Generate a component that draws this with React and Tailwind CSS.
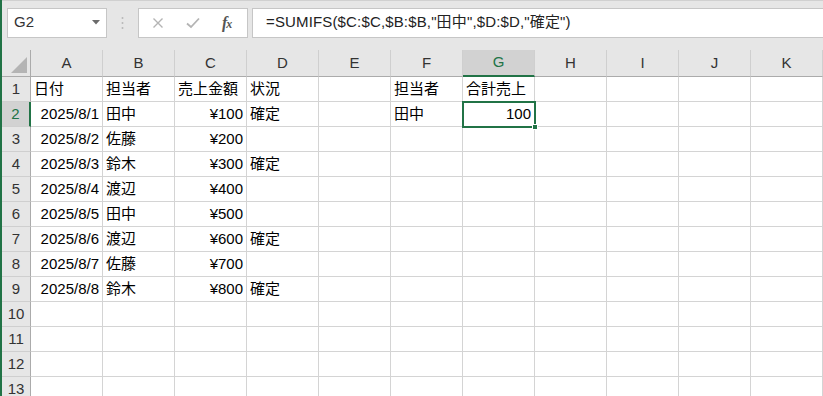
import React from 'react';

const cols = ['A', 'B', 'C', 'D', 'E', 'F', 'G', 'H', 'I', 'J', 'K'];

// each row: [A, B, C, D, E, F, G]
const rows = [
  ['日付', '担当者', '売上金額', '状況', '', '担当者', '合計売上'],
  ['2025/8/1', '田中', '¥100', '確定', '', '田中', '100'],
  ['2025/8/2', '佐藤', '¥200', '', '', '', ''],
  ['2025/8/3', '鈴木', '¥300', '確定', '', '', ''],
  ['2025/8/4', '渡辺', '¥400', '', '', '', ''],
  ['2025/8/5', '田中', '¥500', '', '', '', ''],
  ['2025/8/6', '渡辺', '¥600', '確定', '', '', ''],
  ['2025/8/7', '佐藤', '¥700', '', '', '', ''],
  ['2025/8/8', '鈴木', '¥800', '確定', '', '', ''],
  [], [], [], []
];

const rightAligned = (v) => /^[¥\d]/.test(v);

const FormulaBar = () => (
  <div className="flex items-center h-[50px] bg-[#e6e6e6] border-t border-[#d0d0d0] pb-[6px]">
    {/* name box */}
    <div className="ml-[5px] w-[100px] h-[30px] bg-white border border-[#c6c6c6] flex items-center justify-between pl-[6px] pr-[6px]">
      <span className="text-[15px] text-[#333]">G2</span>
      <svg width="8" height="5" viewBox="0 0 8 5">
        <path d="M0 0 L8 0 L4 4.5 Z" fill="#6b6b6b" />
      </svg>
    </div>
    <div className="w-[31px] flex justify-center">
      <svg width="3" height="14" viewBox="0 0 3 14">
        <circle cx="1.5" cy="2" r="1" fill="#b8b8b8" />
        <circle cx="1.5" cy="7" r="1" fill="#b8b8b8" />
        <circle cx="1.5" cy="12" r="1" fill="#b8b8b8" />
      </svg>
    </div>
    {/* cancel / enter / fx */}
    <div className="w-[110px] h-[30px] bg-white border border-[#c6c6c6] flex items-center">
      <svg className="ml-[13px]" width="12" height="12" viewBox="0 0 12 12">
        <path d="M1.5 1.5 L10.5 10.5 M10.5 1.5 L1.5 10.5" stroke="#b4b4b4" strokeWidth="1.4" />
      </svg>
      <svg className="ml-[22px]" width="14" height="12" viewBox="0 0 14 12">
        <path d="M1 6.5 L5 10 L13 1.5" stroke="#b4b4b4" strokeWidth="1.8" fill="none" />
      </svg>
      <span className="ml-[22px] text-[16px] italic font-bold text-[#555] font-['Liberation_Serif',serif] tracking-[-1px]">
        f<span className="text-[12px]">x</span>
      </span>
    </div>
    <div className="ml-[4px] flex-1 h-[30px] bg-white border border-[#c6c6c6] border-r-0 flex items-center pl-[13px]">
      <span className="text-[15px] text-[#222] whitespace-nowrap tracking-[0.15px]">=SUMIFS($C:$C,$B:$B,"田中",$D:$D,"確定")</span>
    </div>
  </div>
);

const Sheet = () => (
  <div className="grid grid-cols-[29px_repeat(11,72px)] grid-rows-[27px] auto-rows-[25px]">
    {/* header row */}
    <div className="bg-[#e6e6e6] border-r border-b border-[#ababab] flex items-end justify-end p-[3px]">
      <svg width="16" height="16" viewBox="0 0 16 16">
        <path d="M16 0 L16 16 L0 16 Z" fill="#b4b4b4" />
      </svg>
    </div>
    {cols.map((c) => (
      <div
        key={c}
        className={`flex items-center justify-center text-[15px] border-r border-[#cfcfcf] ${
          c === 'G'
            ? 'bg-[#d2d2d2] text-[#217346] border-b-2 border-b-[#217346]'
            : 'bg-[#e6e6e6] text-[#333] border-b border-b-[#ababab]'
        }`}
      >
        {c}
      </div>
    ))}
    {rows.map((r, i) => (
      <React.Fragment key={i}>
        <div
          className={`flex items-center justify-center text-[15px] border-b border-[#cfcfcf] ${
            i === 1
              ? 'bg-[#d2d2d2] text-[#217346] border-r-2 border-r-[#217346]'
              : 'bg-[#e6e6e6] text-[#333] border-r border-r-[#ababab]'
          }`}
        >
          {i + 1}
        </div>
        {cols.map((c, j) => {
          const v = r[j] || '';
          const sel = i === 1 && c === 'G';
          return (
            <div
              key={c}
              className={`relative bg-white border-r border-b border-[#d4d4d4] flex items-center px-[3px] text-[15px] text-black whitespace-nowrap ${
                rightAligned(v) ? 'justify-end' : 'justify-start'
              } ${sel ? 'z-10' : ''}`}
            >
              {v}
              {sel && (
                <div className="absolute -left-[1px] -top-[1px] w-[74px] h-[27px] border-2 border-[#217346]">
                  <div className="absolute -right-[4px] -bottom-[4px] w-[6px] h-[6px] bg-[#217346] border border-white" />
                </div>
              )}
            </div>
          );
        })}
      </React.Fragment>
    ))}
  </div>
);

export default function App() {
  return (
    <div className="w-[823px] h-[396px] overflow-hidden bg-white border-l-2 border-[#217346] font-['Liberation_Sans','Noto_Sans_CJK_JP',sans-serif]">
      <FormulaBar />
      <Sheet />
    </div>
  );
}
